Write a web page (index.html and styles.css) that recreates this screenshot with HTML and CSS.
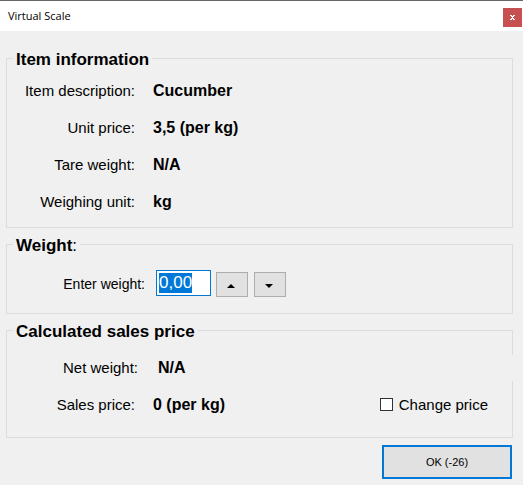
FILE: index.html
```html
<!DOCTYPE html>
<html lang="en">
<head>
<meta charset="utf-8">
<title>Virtual Scale</title>
<link rel="stylesheet" href="styles.css">
</head>
<body>
<header class="titlebar">
  <h1 class="title">Virtual Scale</h1>
  <button class="close" type="button" aria-label="Close">
    <svg width="5" height="5" viewBox="0 0 5 5" shape-rendering="crispEdges" fill="#fff"><path d="M0 0h2v1H0zM3 0h2v1H3zM1 1h3v1H1zM2 2h1v1H2zM1 3h3v1H1zM0 4h2v1H0zM3 4h2v1H3z"/></svg>
  </button>
</header>
<form class="form">
  <fieldset class="group">
    <legend>Item information</legend>
    <dl class="rows">
      <div class="row"><dt>Item description:</dt><dd>Cucumber</dd></div>
      <div class="row"><dt>Unit price:</dt><dd>3,5 (per kg)</dd></div>
      <div class="row"><dt>Tare weight:</dt><dd>N/A</dd></div>
      <div class="row"><dt>Weighing unit:</dt><dd>kg</dd></div>
    </dl>
  </fieldset>
  <fieldset class="group">
    <legend>Weight<span class="colon">:</span></legend>
    <div class="entry">
      <label class="entry-label" for="weight">Enter weight:</label>
      <input class="weight" id="weight" type="text" value="0,00" autofocus>
      <button class="step" type="button" aria-label="Increase"><svg width="8" height="4" viewBox="0 0 8 4"><path d="M4 0L8 4H0z"/></svg></button>
      <button class="step" type="button" aria-label="Decrease"><svg width="8" height="4" viewBox="0 0 8 4"><path d="M0 0H8L4 4z"/></svg></button>
    </div>
  </fieldset>
  <fieldset class="group">
    <legend>Calculated sales price</legend>
    <dl class="rows price-rows">
      <div class="row net"><dt>Net weight:</dt><dd>N/A</dd></div>
      <div class="row"><dt>Sales price:</dt><dd>0 (per kg)</dd>
        <dd class="change"><input class="check" id="change" type="checkbox"><label for="change">Change price</label></dd>
      </div>
    </dl>
  </fieldset>
  <button class="ok" type="button">OK (-26)</button>
</form>
<script src="script.js"></script>
</body>
</html>
```
FILE: styles.css
```css
* {
  box-sizing: border-box;
}

body {
  margin: 0;
  min-height: 100vh;
  background: #f0f0f0;
  color: #000;
  font: 15px/20px "Liberation Sans", Arial, sans-serif;
}

.titlebar {
  display: flex;
  align-items: center;
  justify-content: space-between;
  height: 31px;
  padding: 4px 1px 0 8px;
  border-top: 1px solid #666;
  background: #fff;
}

.title {
  margin: 0 0 4px;
  font: 11px/16px "Open Sans", "Noto Sans", sans-serif;
}

.close {
  display: flex;
  align-items: center;
  justify-content: center;
  width: 19px;
  height: 19px;
  margin-bottom: 2px;
  padding: 0;
  border: 0;
  background: #c75050;
}

.form {
  display: flex;
  flex-direction: column;
  gap: 6px;
  padding: 17px 10px 6px 6px;
}

.group {
  min-width: 0;
  margin: 0;
  padding: 0 6px;
  border: 1px solid #dcdcdc;
}

legend {
  padding: 3px 3px 0;
  font-size: 17px;
  font-weight: bold;
  line-height: 17px;
}

.colon {
  font-weight: normal;
}

.rows {
  margin: 0;
  padding: 4px 0 7px;
}

.price-rows {
  padding: 9px 0 14px;
}

.row {
  display: flex;
  align-items: center;
  gap: 18px;
  height: 37px;
}

dt {
  flex: none;
  width: 122px;
  text-align: right;
}

dd {
  margin: 0;
  font-size: 16px;
  font-weight: bold;
}

.net dt {
  width: 125px;
}

/* The net weight panel spans the full width and covers the group border. */
.net dd {
  flex: 1;
  margin-right: -7px;
  padding: 3px 2px;
  background: #f0f0f0;
}

.change {
  display: flex;
  align-items: center;
  gap: 6px;
  margin-left: auto;
  padding-right: 18px;
  font-size: 15px;
  font-weight: normal;
}

.check {
  appearance: none;
  width: 13px;
  height: 13px;
  margin: 0;
  border: 1px solid #333;
  background: #fff;
}

.check:checked {
  background: #0078d7;
}

.entry {
  display: flex;
  align-items: flex-end;
  padding: 16px 0;
}

.entry-label {
  width: 132px;
  margin-right: 11px;
  padding-bottom: 3px;
  font-size: 14px;
  text-align: right;
}

.weight {
  width: 55px;
  height: 26px;
  margin: 0 5px 1px 0;
  padding: 0 2px;
  border: 1px solid #0078d7;
  outline: 0;
  background: #fff;
  font: 17px/22px "Liberation Sans", Arial, sans-serif;
}

.weight::selection {
  background: #0078d7;
  color: #fff;
}

.step {
  display: flex;
  align-items: center;
  justify-content: center;
  width: 32px;
  height: 25px;
  margin-right: 6px;
  padding: 2px 3px 0 0;
  border: 1px solid #adadad;
  background: #e1e1e1;
}

.ok {
  align-self: flex-end;
  width: 130px;
  height: 34px;
  margin: 1px 1px 0 0;
  border: 2px solid #0078d7;
  background: #e1e1e1;
  color: #000;
  font: 11px/16px "Liberation Sans", Arial, sans-serif;
}
```
FILE: script.js
```js
const weight = document.getElementById("weight");
weight.focus();
weight.select();
```
